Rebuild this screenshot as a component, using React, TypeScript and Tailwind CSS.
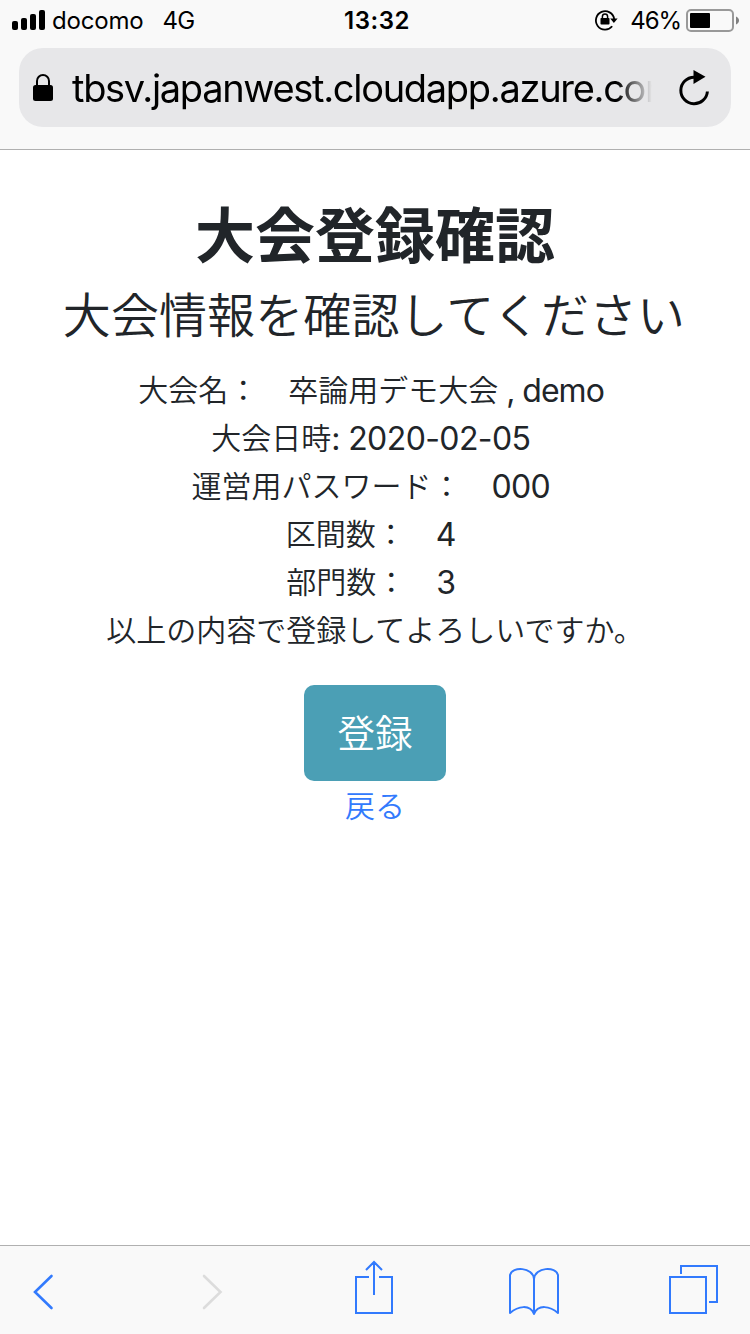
import type { ReactNode } from "react";

const Latin = ({ children }: { children: ReactNode }) => (
  <span className="relative top-px text-[32px] tracking-[-0.6px]">{children}</span>
);

const Row = ({ children }: { children: ReactNode }) => (
  <p className="h-12 whitespace-pre text-center leading-[48px]">{children}</p>
);

function StatusBar() {
  return (
    <div className="flex h-10 items-center text-[24px] leading-10 text-black">
      <div className="flex flex-1 items-center pl-3">
        <svg width="34" height="20" viewBox="0 0 34 20">
          <rect x="0" y="11" width="6" height="9" rx="2" />
          <rect x="9" y="8" width="6" height="12" rx="2" />
          <rect x="18" y="4" width="6" height="16" rx="2" />
          <rect x="27" y="0" width="6" height="20" rx="2" />
        </svg>
        <span className="ml-1.5 pt-0.5 tracking-[-0.2px]">docomo</span>
        <span className="ml-[19px] pt-0.5 tracking-[-0.6px]">4G</span>
      </div>
      <span className="pl-[3px] pt-0.5 font-semibold tracking-[0.5px]">13:32</span>
      <div className="flex flex-1 items-center justify-end pr-[11px]">
        <svg className="mr-3" width="24" height="22" viewBox="0 0 24 22" fill="none">
          <path d="M18.200 17.300A9.200 9.200 0 1 1 20.200 10" stroke="#000" strokeWidth="1.8" />
          <path d="M16.200 9.600h7.400l-3.700 4.400z" fill="#000" />
          <rect x="6.500" y="9" width="9" height="6.500" rx="0.8" fill="#000" />
          <path d="M8.400 9.500V7.600a2.600 2.600 0 0 1 5.200 0v1.900" stroke="#000" strokeWidth="1.500" />
        </svg>
        <span className="pt-0.5 tracking-[-1.1px]">46%</span>
        <svg className="ml-[5px]" width="53" height="24" viewBox="0 0 53 24" fill="none">
          <rect x="1" y="2" width="46" height="21" rx="4" stroke="#999" strokeWidth="2" />
          <rect x="4" y="5" width="20" height="15" rx="1" fill="#000" />
          <path d="M50 8.500c4 1.500 4 6.500 0 8z" fill="#808080" />
        </svg>
      </div>
    </div>
  );
}

function AddressBar() {
  return (
    <div className="mx-[19px] mt-2 flex h-[79px] items-center rounded-[24px] bg-[#e7e7e9] pl-3.5 pr-5">
      <svg className="shrink-0" width="20" height="28" viewBox="0 0 20 28">
        <rect x="0" y="11" width="20" height="16" rx="2.500" />
        <path d="M4 13V7a6 6 0 0 1 12 0V13" fill="none" stroke="#000" strokeWidth="2" />
      </svg>
      <div className="ml-[19px] w-[580px] overflow-hidden whitespace-nowrap text-[38px] leading-[60px] tracking-[-1.300px] text-black [mask-image:linear-gradient(to_right,#000_94%,transparent_100%)]">
        tbsv.japanwest.cloudapp.azure.com
      </div>
      <svg className="ml-auto shrink-0" width="34" height="38" viewBox="0 0 34 38" fill="none">
        <path d="M17 8.200A13.300 13.300 0 1 0 30.400 22.500" stroke="#000" strokeWidth="3" />
        <path d="M16.500 1v14l12-7.200z" fill="#000" />
      </svg>
    </div>
  );
}

function Toolbar() {
  return (
    <nav className="h-[89px] border-t border-[#b0b0b0] bg-[#f9f9f9]">
      <svg width="750" height="88" viewBox="0 1246 750 88" fill="none" stroke="#327afd" strokeWidth="2">
        <path d="M51.500 1276L35 1292l16.500 16" strokeWidth="2.600" strokeLinecap="round" />
        <path d="M204 1276l16.500 16L204 1308" stroke="#dcdcdc" strokeWidth="2.600" strokeLinecap="round" />
        <path d="M369 1277h-13v36h36v-36h-13M374 1295v-32M366 1270l8-8 8 8" />
        <path d="M534 1279c-1-12-22-13-24-4v38c8-7 20-9 24 1zM534 1279c1-12 22-13 24-4v38c-8-7-20-9-24 1z" strokeLinejoin="round" />
        <path d="M670 1277h36v36h-36zM681 1274v-8h36v36h-8" />
      </svg>
    </nav>
  );
}

export default function App() {
  return (
    <div className="flex h-[1334px] w-[750px] flex-col overflow-hidden bg-white font-[Inter,'Noto_Sans_CJK_JP',sans-serif] text-[#212529]">
      <header className="h-[150px] shrink-0 border-b border-[#b0b0b0] bg-[#f9f9f9]">
        <StatusBar />
        <AddressBar />
      </header>
      <main className="flex flex-1 flex-col items-center pt-[46px] font-['Noto_Sans_CJK_JP_DemiLight','Noto_Sans_CJK_JP',sans-serif]">
        <h1 className="h-[72px] font-['Noto_Sans_CJK_JP',sans-serif] text-[60px] font-bold leading-[72px]">大会登録確認</h1>
        <h2 className="mt-4 h-14 whitespace-nowrap pr-0.5 text-[48px] font-[350] leading-[56px] tracking-[0.1px]">大会情報を確認してください</h2>
        <div className="mt-[26px] font-[Inter,'Noto_Sans_CJK_JP_DemiLight','Noto_Sans_CJK_JP',sans-serif] text-[30px] font-[350] [&_span]:font-normal">
          <Row>大会名：　卒論用デモ大会<Latin><span className="tracking-[-1px]"> , demo </span></Latin></Row>
          <Row>大会日時<Latin>: 2020-02-05 </Latin></Row>
          <Row>運営用パスワード：　<Latin>000 </Latin></Row>
          <Row>区間数：　<Latin>4 </Latin></Row>
          <Row>部門数：　<Latin>3 </Latin></Row>
          <Row>以上の内容で登録してよろしいですか。</Row>
        </div>
        <button className="mt-[31px] h-24 w-[142px] rounded-[10px] bg-[#4b9fb5] text-[37.500px] font-[350] leading-[92px] text-white"><span className="block h-24">登録</span></button>
        <a href="#" className="-mt-px text-[30px] font-[350] leading-[48px] text-[#327afd]">戻る</a>
      </main>
      <Toolbar />
    </div>
  );
}
